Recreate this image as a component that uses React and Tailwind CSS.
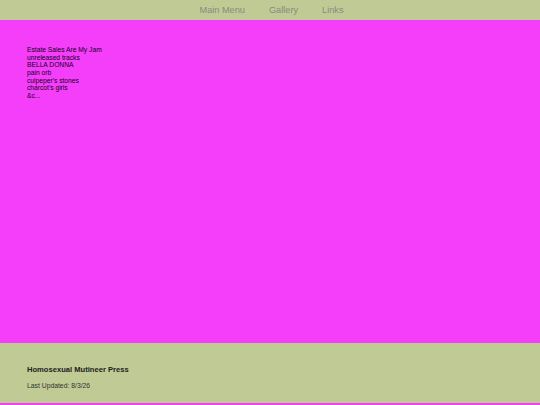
export default function App() {
  const works = [
    "Estate Sales Are My Jam",
    "unreleased tracks",
    "BELLA DONNA",
    "pain orb",
    "culpeper's stones",
    "charcot's girls",
    "&c...",
  ];

  return (
    <div className="min-h-[405px] flex flex-col bg-[#f43ef9] font-['Liberation_Sans',Arial,sans-serif]">
      <nav className="h-[20px] bg-[#bfca94] flex items-center justify-center gap-[24px] pl-[3px] pt-[2px] text-[9.2px] text-[#8a8a80]">
        <a href="#" className="leading-none">Main Menu</a>
        <a href="#" className="leading-none">Gallery</a>
        <a href="#" className="leading-none">Links</a>
      </nav>

      <main className="flex-1 pt-[26px] pl-[27px]">
        <ul className="text-[6.7px] leading-[7.65px] text-[#14001c]">
          {works.map((w) => (
            <li key={w}>{w}</li>
          ))}
        </ul>
      </main>

      <footer className="h-[60px] bg-[#bfca94] pt-[22px] pl-[27px] text-[#222]">
        <h2 className="text-[7.6px] leading-[9px] font-bold">Homosexual Mutineer Press</h2>
        <p className="mt-[8px] text-[6.8px] leading-[8px] text-[#333]">Last Updated: 8/3/26</p>
      </footer>
      <div className="h-[2px]" />
    </div>
  );
}
